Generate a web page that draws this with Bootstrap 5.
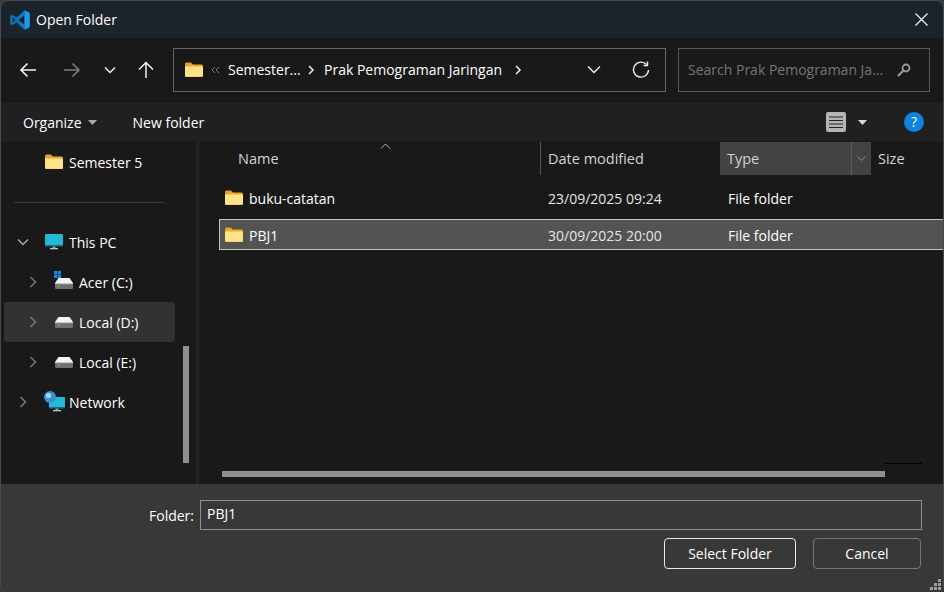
<!doctype html>
<html lang="en">
<head>
<meta charset="UTF-8">
<meta name="viewport" content="width=device-width, initial-scale=1">
<title>Open Folder</title>
<link href="https://cdn.jsdelivr.net/npm/bootstrap@5.3.2/dist/css/bootstrap.min.css" rel="stylesheet">
<style>
html, body { height: 100%; background: #3a3a3a; }
body { font-family: "Open Sans", "Noto Sans", sans-serif; font-size: 14px; color: #fff; overflow: hidden; }
.dlg { width: 944px; height: 592px; background: #383838; border: 1px solid #4a4a4a; border-bottom: 0; border-radius: 8px; overflow: hidden; position: relative; }
.titlebar { height: 37px; background: #1b232b; padding-left: 9px; }
.titlebar span { margin-left: 6px; }
.navband { height: 65px; background: #191919; padding-bottom: 2px; }
.navbtn { width: 44px; justify-content: center; }
.pathbox { margin-left: 4px; width: 493px; height: 44px; border: 1px solid #666; padding-left: 11px; }
.pathbox span { white-space: nowrap; }
.searchbox { margin-left: 12px; width: 252px; height: 44px; border: 1px solid #5a5a5a; padding: 0 18px 0 9px; color: #767676; }
.cmdbar { height: 38px; background: #202020; padding-left: 22px; }
.mainarea { height: 343px; background: #191919; position: relative; }
.sidepane { width: 198px; border-right: 3px solid #222; padding-top: 1px; flex: none; }
.treerow { height: 40px; width: 171px; margin-left: 3px; border-radius: 3px; }
.treerow.sel { background: #323232; }
.treesep { height: 40px; }
.treesep div { width: 151px; margin-left: 13px; border-top: 1px solid #383838; }
.chev { width: 12px; margin-right: 16px; flex: none; }
.ico { width: 18px; height: 18px; margin-right: 6px; flex: none; }
.listpane { flex: 1; min-width: 0; overflow: hidden; }
.headrow { height: 33px; margin-top: 1px; color: #d4d4d4; font-size: 14.500px; }
.colname { width: 341px; padding-left: 39px; }
.coldate { width: 180px; padding-left: 7px; height: 100%; border-left: 1px solid #555; }
.coltype { width: 151px; padding-left: 7px; height: 100%; background: #434343; position: relative; }
.coltype i { position: absolute; right: 0; top: 0; bottom: 0; width: 20px; border-left: 1px solid #5c5c5c; display: flex; align-items: center; justify-content: center; }
.colsize { padding-left: 7px; }
.filerow { height: 31px; margin: 0 -30px 6px 20px; padding-left: 5px; border: 1px solid transparent; }
.filerow > div { padding-top: 2px; }
.filerow.sel { background: #535353; border-color: #c4c4c4; }
.fname { width: 299px; }
.fdate { width: 180px; color: #e6e6e6; }
.sortcaret { position: absolute; left: 379px; top: 2px; }
.vscroll { position: absolute; left: 182px; top: 205px; width: 6px; height: 117px; background: #8f8f8f; }
.hscroll { position: absolute; left: 221px; top: 330px; width: 663px; height: 6px; background: #8f8f8f; }
.blackline { position: absolute; left: 884px; top: 322px; width: 37px; height: 1px; background: #000; }
.footbar { height: 108px; padding-top: 16px; }
.fieldrow { padding-left: 148px; }
.fieldrow label { width: 51px; }
.form-control.foldinp { width: 722px; height: 30px; background: #383838; border: 1px solid #8f8f8f; border-radius: 0; color: #fff; font-size: 14px; padding: 0 6px 4px; }
.btnrow { margin-top: 8px; padding-right: 22px; }
.btn.dlgbtn { height: 31px; color: #fff; background: #383838; font-size: 14px; border-radius: 4px; padding: 0; }
.btn.primbtn { width: 132px; border: 1px solid #e8e8e8; margin-right: 17px; }
.btn.secbtn { width: 108px; border: 1px solid #777; }
.grip { position: absolute; right: 2px; bottom: 2px; }
</style>
</head>
<body>
<svg width="0" height="0" class="position-absolute">
  <symbol id="folder" viewBox="0 0 18 16">
    <path d="M0 2a1.500 1.500 0 0 1 1.500-1.500h4.500l2 2.500H1z" fill="#e6a323"/>
    <path d="M0 2.500h16.500a1.500 1.500 0 0 1 1.500 1.500v9.500a1.500 1.500 0 0 1-1.500 1.500h-15a1.500 1.500 0 0 1-1.500-1.500z" fill="#e9ab2e"/>
    <path d="M0 4.500h16.800a1.200 1.200 0 0 1 1.200 1.200v7.800a1.200 1.200 0 0 1-1.200 1.200H1.200a1.200 1.200 0 0 1-1.200-1.200z" fill="#fde28a"/>
  </symbol>
  <symbol id="drive" viewBox="0 0 18 11">
    <path d="M3.500 0h11L18 5v.500H0V5z" fill="#f4f4f4"/>
    <rect x="0" y="5" width="18" height="6" rx="1.200" fill="#6f6f6f"/>
    <rect x="0" y="5" width="18" height="1.200" fill="#c8c8c8"/>
    <rect x="3" y="7.500" width="1.500" height="1.500" fill="#3fd04f"/>
  </symbol>
  <symbol id="chevr" viewBox="0 0 12 12"><path d="M3.500 1l5 5-5 5" fill="none" stroke="#7a7a7a" stroke-width="1.500"/></symbol>
</svg>

<div class="dlg">
  <div class="titlebar d-flex align-items-center">
    <svg width="20" height="20" viewBox="0 0 100 100"><path d="M72 1L32 39 13 24 3 29c-2 1-2 3-2 4v34c0 2 0 3 2 4l10 5 19-15 40 38V73L43 50 72 27z" fill="#0f74bd"/><path d="M72 1l24 11c2 1 3 3 3 5v66c0 2-1 4-3 5L72 99z" fill="#1f9cf0"/><path d="M13 36l13 14-13 14z" fill="#1b232b"/></svg>
    <span>Open Folder</span>
    <svg class="ms-auto" style="margin-right:15px" width="13" height="13" viewBox="0 0 13 13"><path d="M.5.500l12 12M12.500.500l-12 12" stroke="#f0f0f0" stroke-width="1.200"/></svg>
  </div>

  <div class="navband d-flex align-items-center">
    <div class="d-flex align-items-center" style="padding-left:5px;width:168px">
      <div class="navbtn d-flex"><svg width="18" height="16" viewBox="0 0 18 16"><path d="M17 8H2M8.500 1.500L2 8l6.500 6.500" fill="none" stroke="#f4f4f4" stroke-width="1.600"/></svg></div>
      <div class="navbtn d-flex"><svg width="18" height="16" viewBox="0 0 18 16"><path d="M1 8h15M9.500 1.500L16 8l-6.500 6.500" fill="none" stroke="#7d7d7d" stroke-width="1.600"/></svg></div>
      <div class="d-flex justify-content-center" style="width:32px"><svg width="12" height="8" viewBox="0 0 12 8"><path d="M1 1.500l5 5 5-5" fill="none" stroke="#eee" stroke-width="1.500"/></svg></div>
      <div class="d-flex justify-content-center" style="width:40px"><svg width="16" height="18" viewBox="0 0 16 18"><path d="M8 17V2M1 8.500L8 1.500l7 7" fill="none" stroke="#f4f4f4" stroke-width="1.500"/></svg></div>
    </div>
    <div class="pathbox d-flex align-items-center">
      <svg width="18" height="16" style="margin-right:8px"><use href="#folder"/></svg>
      <svg width="9" height="8" viewBox="0 0 9 8" style="margin-right:8px"><path d="M4 1L1 4l3 3M8 1L5 4l3 3" fill="none" stroke="#777" stroke-width="1"/></svg>
      <span style="width:73px">Semester...</span>
      <svg width="8" height="10" viewBox="0 0 8 10" style="margin:0 9px 0 6px"><path d="M2 1l4 4-4 4" fill="none" stroke="#eee" stroke-width="1.500"/></svg>
      <span style="width:182px">Prak Pemograman Jaringan</span>
      <svg width="8" height="10" viewBox="0 0 8 10" style="margin-left:8px"><path d="M2 1l4 4-4 4" fill="none" stroke="#eee" stroke-width="1.500"/></svg>
      <svg class="ms-auto" width="14" height="9" viewBox="0 0 14 9" style="margin-right:31px"><path d="M1 1.500l6 6 6-6" fill="none" stroke="#eee" stroke-width="1.400"/></svg>
      <svg width="18" height="18" viewBox="0 0 18 18" style="margin-right:15px"><path d="M14.500 3.500A7.500 7.500 0 1 0 16.500 9" fill="none" stroke="#eee" stroke-width="1.400"/><path d="M15.500 .5v4h-4" fill="none" stroke="#eee" stroke-width="1.400"/></svg>
    </div>
    <div class="searchbox d-flex align-items-center">
      <span style="width:196px" class="text-nowrap overflow-hidden">Search Prak Pemograman Ja...</span>
      <svg class="ms-auto" width="14" height="14" viewBox="0 0 14 14"><circle cx="9" cy="5" r="3.500" fill="none" stroke="#9a9a9a" stroke-width="1.800"/><path d="M6.500 7.500L1 13" stroke="#9a9a9a" stroke-width="2.200"/></svg>
    </div>
  </div>

  <div class="cmdbar d-flex align-items-center">
    <span>Organize</span>
    <svg width="9" height="5" viewBox="0 0 9 5" style="margin-left:6px"><path d="M0 0h9L4.500 5z" fill="#a8a8a8"/></svg>
    <span style="margin-left:36px">New folder</span>
    <svg class="ms-auto" width="20" height="20" viewBox="0 0 20 20"><rect width="20" height="20" rx="2" fill="#b4b4b4"/><path d="M3 5h14M3 8.500h14M3 12h14M3 15.500h14" stroke="#222" stroke-width="1.200"/></svg>
    <svg width="9" height="5" viewBox="0 0 9 5" style="margin-left:12px"><path d="M0 0h9L4.500 5z" fill="#d8d8d8"/></svg>
    <svg width="20" height="20" viewBox="0 0 20 20" style="margin:0 19px 0 37px"><circle cx="10" cy="10" r="10" fill="#0f83dc"/><text x="10" y="15" text-anchor="middle" font-size="14" font-family="Open Sans" fill="#fff">?</text></svg>
  </div>

  <div class="mainarea d-flex">
    <div class="sidepane">
      <div class="treerow d-flex align-items-center" style="padding-left:41px"><svg class="ico"><use href="#folder"/></svg>Semester 5</div>
      <div class="treesep d-flex align-items-center"><div></div></div>
      <div class="treerow d-flex align-items-center" style="padding-left:13px">
        <svg class="chev" height="8" viewBox="0 0 12 8"><path d="M1 1.500l5 5 5-5" fill="none" stroke="#a8a8a8" stroke-width="1.500"/></svg>
        <svg class="ico" viewBox="0 0 18 18"><rect y="1" width="18" height="12" rx="1" fill="#23b7d8"/><rect y="12" width="18" height="1.500" fill="#0e6f8f"/><rect x="7.500" y="13.500" width="3" height="2" fill="#8a9aa0"/><rect x="5" y="15" width="8" height="1.300" fill="#b8c4c8"/></svg>This PC
      </div>
      <div class="treerow d-flex align-items-center" style="padding-left:23px">
        <svg class="chev" height="12"><use href="#chevr"/></svg>
        <svg class="ico" viewBox="0 0 18 18" style="overflow:visible"><use href="#drive" x="0" y="5" width="18" height="11"/><path d="M-1-2h3.200v3.200H-1zM2.800-2H6v3.200H2.800zM-1 1.800h3.200V5H-1zM2.800 1.800H6V5H2.800z" fill="#0f8fe8"/></svg>Acer (C:)
      </div>
      <div class="treerow sel d-flex align-items-center" style="padding-left:23px">
        <svg class="chev" height="12"><use href="#chevr"/></svg>
        <svg class="ico" viewBox="0 0 18 18"><use href="#drive" x="0" y="4" width="18" height="11"/></svg>Local (D:)
      </div>
      <div class="treerow d-flex align-items-center" style="padding-left:23px">
        <svg class="chev" height="12"><use href="#chevr"/></svg>
        <svg class="ico" viewBox="0 0 18 18"><use href="#drive" x="0" y="4" width="18" height="11"/></svg>Local (E:)
      </div>
      <div class="treerow d-flex align-items-center" style="padding-left:13px">
        <svg class="chev" height="12"><use href="#chevr"/></svg>
        <svg class="ico" style="height:22px;width:21px;margin-left:-1px;margin-right:4px" viewBox="0 0 21 22"><rect x="5" y="6" width="16" height="11" rx="1" fill="#23b7d8"/><rect x="5" y="16" width="16" height="1.500" fill="#0e6f8f"/><rect x="11.500" y="17.500" width="3" height="2" fill="#8a9aa0"/><rect x="9" y="19" width="8" height="1.300" fill="#b8c4c8"/><circle cx="6" cy="6" r="6" fill="#3c8fd0"/><circle cx="4.500" cy="4.500" r="2.600" fill="#a4d4f4"/></svg>Network
      </div>
    </div>
    <div class="listpane">
      <div class="headrow d-flex align-items-center">
        <div class="colname">Name</div>
        <div class="coldate d-flex align-items-center">Date modified</div>
        <div class="coltype d-flex align-items-center">Type<i><svg width="9" height="5" viewBox="0 0 9 5"><path d="M.5.500l4 4 4-4" fill="none" stroke="#8d8d8d"/></svg></i></div>
        <div class="colsize">Size</div>
      </div>
      <div class="filerow d-flex align-items-center" style="margin-top:7px">
        <svg class="ico"><use href="#folder"/></svg>
        <div class="fname">buku-catatan</div><div class="fdate">23/09/2025 09:24</div><div>File folder</div>
      </div>
      <div class="filerow sel d-flex align-items-center">
        <svg class="ico"><use href="#folder"/></svg>
        <div class="fname">PBJ1</div><div class="fdate">30/09/2025 20:00</div><div>File folder</div>
      </div>
    </div>
    <svg class="sortcaret" width="11" height="6" viewBox="0 0 11 6"><path d="M1 5.500l4.500-4.500 4.500 4.500" fill="none" stroke="#b0b0b0"/></svg>
    <div class="vscroll"></div>
    <div class="hscroll"></div>
    <div class="blackline"></div>
  </div>

  <div class="footbar">
    <div class="fieldrow d-flex align-items-center">
      <label>Folder:</label>
      <input class="form-control foldinp" type="text" value="PBJ1">
    </div>
    <div class="btnrow d-flex justify-content-end">
      <button class="btn dlgbtn primbtn">Select Folder</button>
      <button class="btn dlgbtn secbtn">Cancel</button>
    </div>
  </div>
  <svg class="grip" width="11" height="11" viewBox="0 0 11 11"><path d="M8 0h3v3H8zM4 4h3v3H4zM8 4h3v3H8zM0 8h3v3H0zM4 8h3v3H4zM8 8h3v3H8z" fill="#a0a0a0"/></svg>
</div>
</body>
</html>
